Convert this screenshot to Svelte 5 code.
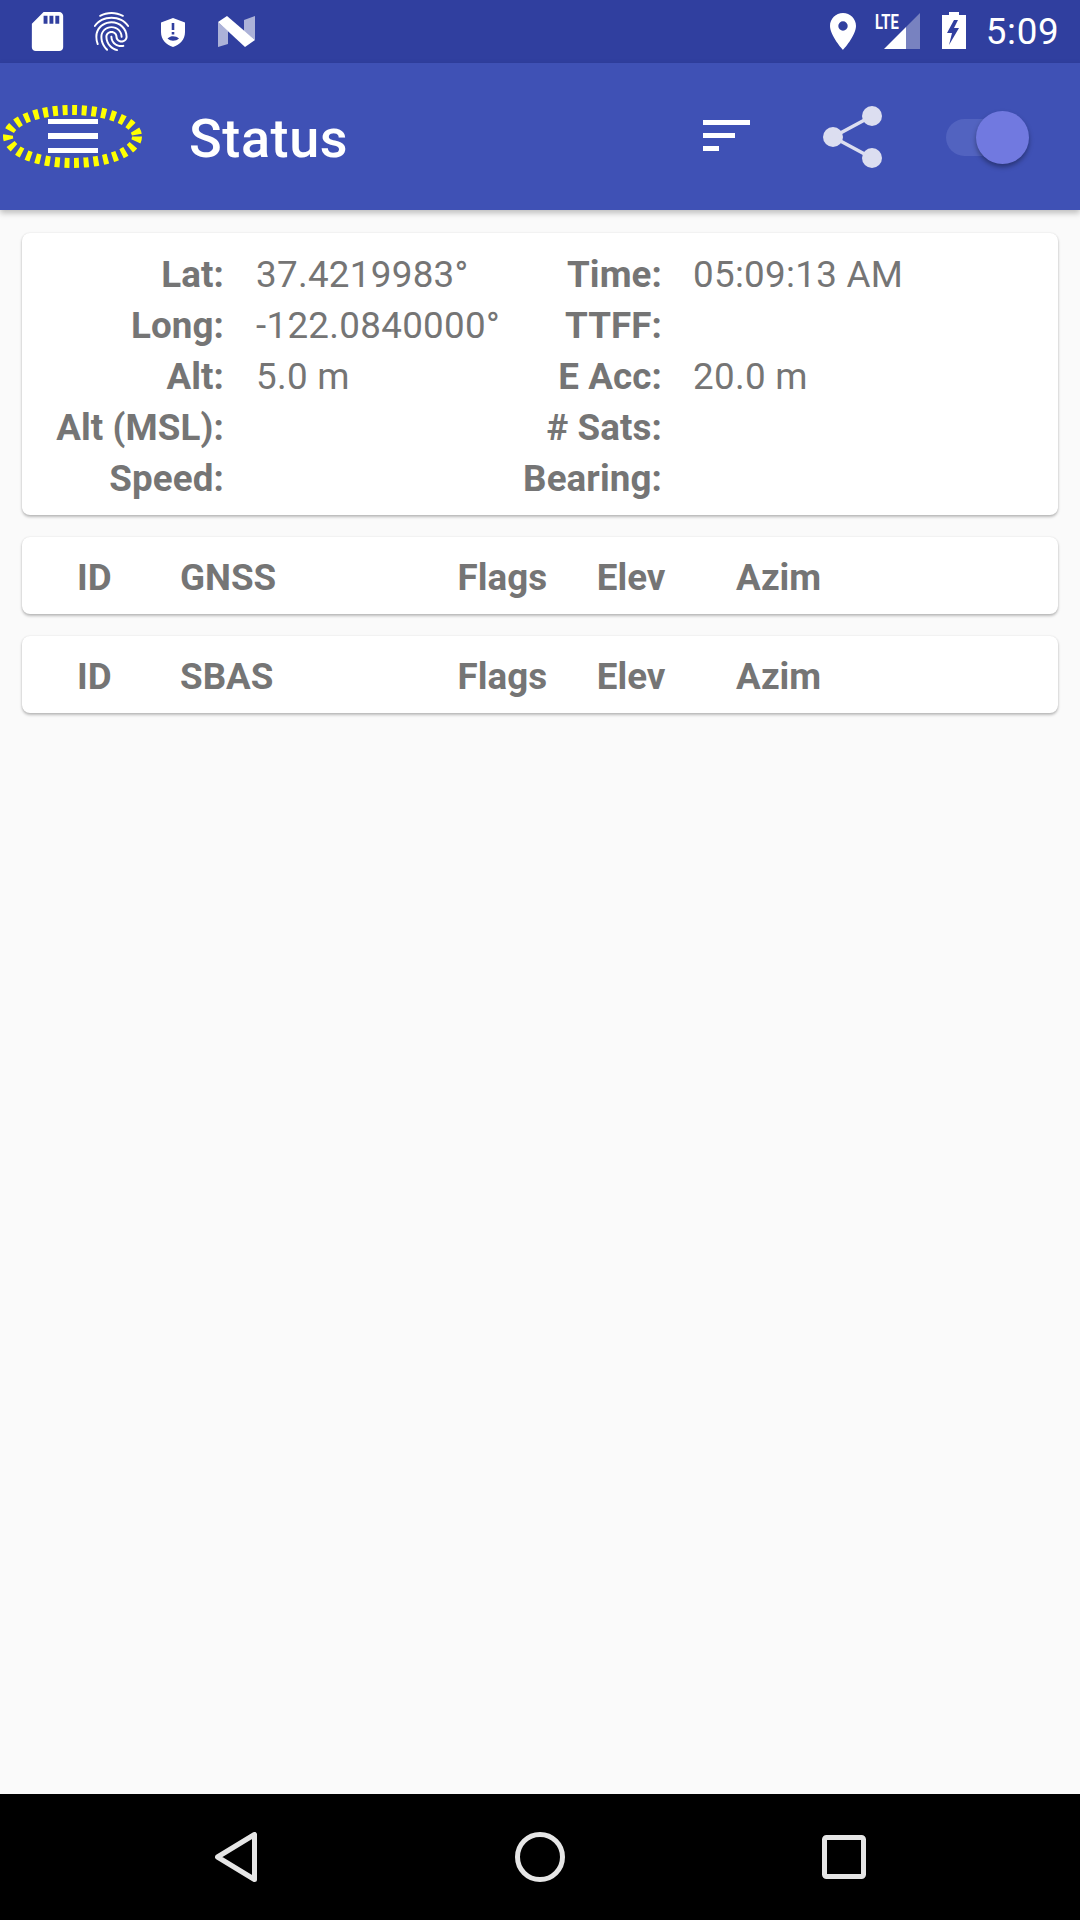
<script>
  const stats = [
    ['Lat:', '37.4219983°', 'Time:', '05:09:13 AM'],
    ['Long:', '-122.0840000°', 'TTFF:', ''],
    ['Alt:', '5.0 m', 'E Acc:', '20.0 m'],
    ['Alt (MSL):', '', '# Sats:', ''],
    ['Speed:', '', 'Bearing:', '']
  ];
  const tables = ['GNSS', 'SBAS'];
</script>

<div class="screen">
  <header class="status">
    <div class="status-left">
      <svg class="sd" viewBox="0 0 24 24"><path fill="#fff" d="M18 2h-8L4.02 8 4 20c0 1.1.9 2 2 2h12c1.1 0 2-.9 2-2V4c0-1.1-.9-2-2-2zm-6 6h-2V4h2v4zm3 0h-2V4h2v4zm3 0h-2V4h2v4z"/></svg>
      <svg class="fp" viewBox="0 0 24 24"><path fill="#fff" d="M17.81 4.47c-.08 0-.16-.02-.23-.06C15.66 3.42 14 3 12.01 3c-1.98 0-3.86.47-5.58 1.41-.24.13-.54.04-.68-.2-.13-.24-.04-.55.2-.68C7.82 2.52 9.86 2 12.01 2c2.13 0 3.99.47 6.03 1.52.25.13.34.43.21.67-.09.18-.26.28-.44.28zM3.5 9.72c-.1 0-.2-.03-.29-.09-.23-.16-.28-.47-.12-.7.99-1.4 2.25-2.5 3.75-3.27C9.98 4.04 14 4.03 17.15 5.65c1.5.77 2.76 1.86 3.75 3.25.16.22.11.54-.12.7-.23.16-.54.11-.7-.12-.9-1.26-2.04-2.25-3.39-2.94-2.87-1.47-6.54-1.47-9.4.01-1.36.7-2.5 1.7-3.4 2.96-.08.14-.23.21-.39.21zm6.25 12.07c-.13 0-.26-.05-.35-.15-.87-.87-1.34-1.43-2.01-2.64-.69-1.23-1.05-2.73-1.05-4.34 0-2.97 2.54-5.39 5.66-5.39s5.66 2.42 5.66 5.39c0 .28-.22.5-.5.5s-.5-.22-.5-.5c0-2.42-2.09-4.39-4.66-4.39s-4.66 1.97-4.66 4.39c0 1.44.32 2.77.93 3.85.64 1.15 1.08 1.64 1.85 2.42.19.2.19.51 0 .71-.11.1-.24.15-.37.15zm7.17-1.85c-1.19 0-2.24-.3-3.1-.89-1.49-1.01-2.38-2.65-2.38-4.39 0-.28.22-.5.5-.5s.5.22.5.5c0 1.41.72 2.74 1.94 3.56.71.48 1.54.71 2.54.71.24 0 .64-.03 1.04-.1.27-.05.53.13.58.41.05.27-.13.53-.41.58-.57.11-1.07.12-1.21.12zM14.91 22c-.04 0-.09-.01-.13-.02-1.59-.44-2.63-1.03-3.72-2.1-1.4-1.39-2.17-3.24-2.17-5.22 0-1.62 1.38-2.94 3.08-2.94s3.08 1.32 3.08 2.94c0 1.07.93 1.94 2.08 1.94s2.08-.87 2.08-1.94c0-3.77-3.25-6.83-7.25-6.83-2.84 0-5.44 1.58-6.61 4.03-.39.81-.59 1.76-.59 2.8 0 .78.07 2.01.67 3.61.1.26-.03.55-.29.64-.26.1-.55-.04-.64-.29-.49-1.31-.73-2.61-.73-3.96 0-1.2.23-2.29.68-3.24 1.33-2.79 4.28-4.6 7.51-4.6 4.55 0 8.25 3.51 8.25 7.83 0 1.62-1.38 2.94-3.08 2.94s-3.08-1.32-3.08-2.94c0-1.07-.93-1.94-2.08-1.94s-2.08.87-2.08 1.94c0 1.71.66 3.31 1.87 4.51.95.94 1.86 1.46 3.27 1.85.27.07.42.35.35.61-.05.23-.26.38-.47.38z"/></svg>
      <svg class="shield" viewBox="0 0 24 29"><path fill="#fff" fill-rule="evenodd" d="M12 0 L24 4.500 V14 C24 21.500 19 27 12 29 C5 27 0 21.500 0 14 V4.500 Z M10.700 5 V12 H13.300 V5 Z M10.700 14 V16.600 H13.300 V14 Z M6.500 20.500 C8.500 18.800 10 18.300 12 18.300 C14.500 18.300 16.200 19 18 20.500 C16.200 22 14.500 22.700 12 22.700 C10 22.700 8.500 22.200 6.500 20.500 Z"/></svg>
      <svg class="nlogo" viewBox="0 0 37 31"><path fill="#fff" opacity=".6" d="M0 6V31L10 28V15Z"/><path fill="#fff" opacity=".6" d="M26 4 37 0V24L26 15Z"/><path fill="#fff" d="M0 6 9 0 37 24 27 31Z"/></svg>
    </div>
    <div class="status-right">
      <svg class="pin" viewBox="0 0 26 37"><path fill="#fff" fill-rule="evenodd" d="M13 0C5.800 0 0 5.800 0 13c0 9.700 13 24 13 24s13-14.300 13-24C26 5.800 20.200 0 13 0zm0 17.700a4.700 4.700 0 1 1 0-9.400 4.700 4.700 0 0 1 0 9.400z"/></svg>
      <div class="signal">
        <span class="lte">LTE</span>
        <svg viewBox="0 0 36 36"><path fill="#fff" opacity=".35" d="M36 0V36H22V14Z"/><path fill="#fff" d="M22 14V36H0Z"/></svg>
      </div>
      <svg class="batt" viewBox="0 0 24 37"><path fill="#fff" fill-rule="evenodd" d="M7 0H17V3H24V37H0V3H7Z M12 8 L5 21 H10 L7 33 L17 16 H12 L16 8 Z"/></svg>
      <span class="clock">5:09</span>
    </div>
  </header>

  <nav class="appbar">
    <div class="menu">
      <svg class="ring" viewBox="0 0 144 68"><ellipse cx="72.500" cy="31.500" rx="64.500" ry="26.500" fill="none" stroke="#ffff00" stroke-width="10" stroke-dasharray="5 4.700"/></svg>
      <span class="bar"></span><span class="bar"></span><span class="bar"></span>
    </div>
    <h1>Status</h1>
    <div class="sort"><span class="s1"></span><span class="s2"></span><span class="s3"></span></div>
    <svg class="share" viewBox="0 0 60 62"><g fill="#dcdef0"><circle cx="49" cy="10" r="10"/><circle cx="10" cy="31" r="10"/><circle cx="49" cy="52" r="10"/></g><path d="M49 10 10 31 49 52" fill="none" stroke="#dcdef0" stroke-width="3.500"/></svg>
    <div class="toggle"><span class="track"></span><span class="thumb"></span></div>
  </nav>

  <main class="content">
    <section class="card stats">
      {#each stats as row}
        <span class="label">{row[0]}</span>
        <span class="value">{row[1]}</span>
        <span class="label">{row[2]}</span>
        <span class="value">{row[3]}</span>
      {/each}
    </section>
    {#each tables as name}
      <section class="card thead">
        <span>ID</span><span>{name}</span><span>Flags</span><span>Elev</span><span>Azim</span>
      </section>
    {/each}
  </main>

  <footer class="navbar">
    <svg class="back" viewBox="0 0 42 50"><path d="M39.500 2.500V47.500L2.500 25Z" fill="none" stroke="#e6e6e6" stroke-width="5" stroke-linejoin="round"/></svg>
    <svg class="home" viewBox="0 0 50 50"><circle cx="25" cy="25" r="22.500" fill="none" stroke="#e6e6e6" stroke-width="5"/></svg>
    <svg class="recent" viewBox="0 0 44 44"><rect x="2.500" y="2.500" width="39" height="39" rx="2" fill="none" stroke="#e6e6e6" stroke-width="5"/></svg>
  </footer>
</div>

<style>
  :global(body) { margin: 0; background: #fafafa; }
  .screen {
    width: 1080px; height: 1920px; display: flex; flex-direction: column;
    font-family: Roboto, sans-serif; background: #fafafa; overflow: hidden;
  }
  .status {
    height: 63px; flex: none; background: #303f9f; display: flex;
    justify-content: space-between; align-items: flex-start;
  }
  .status-left { display: flex; align-items: flex-start; padding-left: 24px; }
  .sd { width: 47px; height: 47px; margin-top: 8px; }
  .fp { width: 47px; height: 47px; margin: 8px 0 0 17px; }
  .shield { width: 24px; height: 29px; margin: 18px 0 0 26px; }
  .nlogo { width: 37px; height: 31px; margin: 16px 0 0 33px; }
  .status-right { display: flex; align-items: flex-start; padding-right: 20.500px; }
  .pin { width: 26px; height: 37px; margin-top: 13px; }
  .signal { position: relative; width: 45px; height: 37px; margin: 13px 0 0 19px; }
  .signal svg { position: absolute; left: 9px; top: 0; width: 36px; height: 36px; }
  .lte {
    position: absolute; left: 0; top: 0; color: #fff; font-size: 21px; font-weight: 700;
    line-height: 18px; transform: scaleX(.7); transform-origin: left top;
  }
  .batt { width: 24px; height: 37px; margin: 12px 0 0 22px; }
  .clock { color: #fff; font-size: 36.750px; line-height: 63px; margin-left: 20px; letter-spacing: .75px; }

  .appbar {
    position: relative; z-index: 1; height: 147px; flex: none; background: #3f51b5;
    box-shadow: 0 3px 6px rgba(0,0,0,.25); display: flex; align-items: center;
  }
  .menu {
    position: relative; width: 50px; margin: 0 0 1.500px 48px; display: flex; flex-direction: column; gap: 9px;
  }
  .bar { display: block; height: 5.500px; background: #fff; }
  .ring { position: absolute; left: -48px; top: -13.500px; width: 144px; height: 68px; }
  h1 {
    margin: 5px 0 0 91px; flex: 1; color: #fff; font-size: 54px; font-weight: 500; line-height: 1; letter-spacing: .6px;
  }
  .sort { display: flex; flex-direction: column; gap: 8px; width: 47px; margin: 0 73.500px 2px 0; }
  .sort span { display: block; height: 5px; background: #fff; }
  .s1 { width: 47px; } .s2 { width: 32px; } .s3 { width: 16px; }
  .share { width: 60px; height: 62px; margin-right: 63px; }
  .toggle { position: relative; width: 84px; height: 52px; margin-right: 50px; }
  .track {
    position: absolute; left: 0; top: 8px; width: 80px; height: 37px; border-radius: 19px; background: #5263c0;
  }
  .thumb {
    position: absolute; left: 30px; top: 0; width: 53px; height: 53px; border-radius: 50%;
    background: #7179e0; box-shadow: 0 3px 5px rgba(0,0,0,.35);
  }

  .content {
    flex: 1; padding: 23px 22px 0; display: flex; flex-direction: column; gap: 22px; color: #757575;
  }
  .card {
    background: #fff; border-radius: 8px; box-shadow: 0 2px 3px rgba(0,0,0,.25), 0 0 2px rgba(0,0,0,.1);
    font-size: 36.750px;
  }
  .stats {
    height: 282px; box-sizing: border-box; padding-top: 15.500px; display: grid;
    grid-template-columns: 202px 234px 204px 1fr;
    grid-auto-rows: 51px; align-items: center;
  }
  .label { font-weight: 700; text-align: right; letter-spacing: .1px; }
  .value { padding-left: 32px; white-space: nowrap; letter-spacing: .3px; }
  .value:nth-child(4n) { padding-left: 31px; }
  .thead {
    height: 77px; box-sizing: border-box; padding: 3px 0 0 55px; display: grid; align-items: center; font-weight: 700;
    grid-template-columns: 103px 277.600px 139.200px 139.200px 1fr;
  }

  .navbar {
    height: 126px; flex: none; background: #000;
    display: flex; align-items: center;
  }
  .back { width: 42px; height: 50px; margin-left: 215px; }
  .home { width: 50px; height: 50px; margin-left: 258px; }
  .recent { width: 44px; height: 44px; margin-left: 257px; }
</style>
